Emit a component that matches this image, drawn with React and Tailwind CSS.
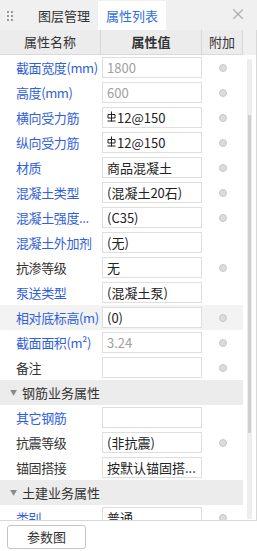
import React from 'react';

const FONT = { fontFamily: '"Noto Sans CJK SC", "Noto Sans", sans-serif' };

const rows = [
  { type: 'row', label: '截面宽度(mm)', value: '1800', blue: true, muted: true, dot: true },
  { type: 'row', label: '高度(mm)', value: '600', blue: true, muted: true, dot: true },
  { type: 'row', label: '横向受力筋', value: '12@150', blue: true, rebar: true, dot: true },
  { type: 'row', label: '纵向受力筋', value: '12@150', blue: true, rebar: true, dot: true },
  { type: 'row', label: '材质', value: '商品混凝土', blue: true, dot: true },
  { type: 'row', label: '混凝土类型', value: '(混凝土20石)', blue: true, dot: true },
  { type: 'row', label: '混凝土强度...', value: '(C35)', blue: true, dot: true },
  { type: 'row', label: '混凝土外加剂', value: '(无)', blue: true },
  { type: 'row', label: '抗渗等级', value: '无', dot: true },
  { type: 'row', label: '泵送类型', value: '(混凝土泵)', blue: true },
  { type: 'row', label: '相对底标高(m)', value: '(0)', blue: true, dot: true, active: true },
  { type: 'row', label: '截面面积(m²)', value: '3.24', blue: true, muted: true, dot: true },
  { type: 'row', label: '备注', value: '', dot: true },
  { type: 'group', label: '钢筋业务属性' },
  { type: 'row', label: '其它钢筋', value: '', blue: true },
  { type: 'row', label: '抗震等级', value: '(非抗震)', dot: true },
  { type: 'row', label: '锚固搭接', value: '按默认锚固搭...' },
  { type: 'group', label: '土建业务属性' },
  { type: 'row', label: '类别', value: '普通', blue: true, dot: true },
];

function RebarMark() {
  // grade III rebar symbol
  return (
    <svg width="9" height="11" viewBox="0 0 9 11" className="mr-[1px] mb-[2px]">
      <path d="M4.5 0.5 V10.5 M1 3.5 H8 V7 H1 Z M0.5 10 H8.5" stroke="#222" strokeWidth="1" fill="none" />
    </svg>
  );
}

function PropRow({ row }) {
  if (row.type === 'group') {
    return (
      <div className="flex h-[25px] items-center bg-[#ececec] text-[13px] text-[#333]">
        <span className="ml-[10px] mr-[5px] text-[7px] text-[#888]">▼</span>
        <span>{row.label}</span>
      </div>
    );
  }
  return (
    <div className={`flex h-[25px] items-center text-[13px] ${row.active ? 'bg-[#f3f3f3]' : ''}`}>
      <div
        className={`w-[101px] shrink-0 whitespace-nowrap pl-[16px] tracking-[-0.4px] ${
          row.blue ? 'text-[#3060dc]' : 'text-[#333]'
        }`}
      >
        {row.label}
      </div>
      <div
        className={`ml-[1px] flex h-[21px] w-[100px] shrink-0 items-center whitespace-nowrap border border-[#dedede] bg-white pl-[4px] ${
          row.muted ? 'text-[#a0a0a0]' : 'text-[#222]'
        }`}
      >
        {row.rebar && <RebarMark />}
        {row.value}
      </div>
      <div className="flex w-[41px] shrink-0 justify-center">
        {row.dot && <div className="h-[8px] w-[8px] rounded-full border border-[#c8c8c8] bg-[#dcdcdc]" />}
      </div>
    </div>
  );
}

export default function App() {
  return (
    <div className="flex h-[551px] w-[257px] flex-col overflow-hidden bg-white" style={FONT}>
      {/* tab bar */}
      <div className="flex h-[30px] shrink-0 items-end bg-[#f0f0f0]">
        <div className="mb-[9px] ml-[7px] grid grid-cols-2 gap-x-[2px] gap-y-[2px]">
          {[0, 1, 2, 3, 4, 5].map((i) => (
            <span key={i} className="h-[2px] w-[2px] bg-[#999]" />
          ))}
        </div>
        <div className="ml-[17px] flex h-[29px] w-[68px] items-center justify-center text-[13px] text-[#333]">
          图层管理
        </div>
        <div className="flex h-[29px] w-[68px] items-center justify-center bg-white text-[13px] text-[#2f6fe0]">
          属性列表
        </div>
        <div className="mb-[9px] ml-auto mr-[11px] text-[16px] leading-none text-[#aaa]">×</div>
      </div>

      {/* property grid */}
      <div className="flex h-[491px] shrink-0 border-b border-r border-[#d8d8d8]">
        <div className="flex w-[243px] shrink-0 flex-col overflow-hidden">
          <div className="flex h-[25px] shrink-0 border-b border-[#dadada] bg-[#ececec] text-[13px] text-[#333]">
            <div className="flex w-[101px] items-center justify-center border-r border-[#d6d6d6]">属性名称</div>
            <div className="flex w-[101px] items-center justify-center border-r border-[#d6d6d6] font-bold">属性值</div>
            <div className="flex w-[41px] items-center justify-center border-r border-[#d6d6d6]">附加</div>
          </div>
          <div className="flex flex-col">
            {rows.map((row, i) => (
              <PropRow key={i} row={row} />
            ))}
          </div>
        </div>
        <div className="flex flex-1 flex-col">
          <div className="h-[25px] bg-[#f0f0f0]" />
          <div className="ml-[4px] mt-[4px] flex h-[460px] w-[5px] flex-col bg-[#ededed]">
            <div className="ml-[1px] mt-[56px] h-[318px] w-[3px] bg-[#cfcfcf]" />
          </div>
        </div>
      </div>

      {/* footer */}
      <div className="flex-1 pl-[7px] pt-[4px]">
        <button
          type="button"
          className="flex h-[24px] w-[79px] items-center justify-center rounded-[3px] border border-[#c4c4c4] bg-white text-[13px] text-[#333]"
        >
          参数图
        </button>
      </div>
    </div>
  );
}
